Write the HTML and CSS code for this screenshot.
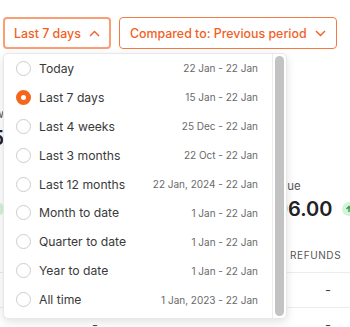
FILE: index.html
```html
<!DOCTYPE html>
<html lang="en">
<head>
  <meta charset="UTF-8">
  <meta name="viewport" content="width=device-width, initial-scale=1.0">
  <title>Overview</title>
  <link rel="stylesheet" href="styles.css">
</head>
<body>

  <div class="toolbar">
    <div class="picker">
      <button class="btn btn-open">Last 7 days
        <svg class="chev" width="11" height="7" viewBox="0 0 11 7"><path d="M1 6 L5.5 1.5 L10 6" fill="none" stroke="currentColor" stroke-width="1.4"/></svg>
      </button>

      <div class="menu">
        <ul class="options">
          <li class="option"><span class="radio"></span><span class="name">Today</span><span class="range">22 Jan - 22 Jan</span></li>
          <li class="option"><span class="radio on"></span><span class="name">Last 7 days</span><span class="range">15 Jan - 22 Jan</span></li>
          <li class="option"><span class="radio"></span><span class="name">Last 4 weeks</span><span class="range">25 Dec - 22 Jan</span></li>
          <li class="option"><span class="radio"></span><span class="name">Last 3 months</span><span class="range">22 Oct - 22 Jan</span></li>
          <li class="option"><span class="radio"></span><span class="name">Last 12 months</span><span class="range">22 Jan, 2024 - 22 Jan</span></li>
          <li class="option"><span class="radio"></span><span class="name">Month to date</span><span class="range">1 Jan - 22 Jan</span></li>
          <li class="option"><span class="radio"></span><span class="name">Quarter to date</span><span class="range">1 Jan - 22 Jan</span></li>
          <li class="option"><span class="radio"></span><span class="name">Year to date</span><span class="range">1 Jan - 22 Jan</span></li>
          <li class="option"><span class="radio"></span><span class="name">All time</span><span class="range">1 Jan, 2023 - 22 Jan</span></li>
        </ul>
        <div class="scroll"><div class="thumb"></div></div>
      </div>
    </div>

    <button class="btn">Compared to: Previous period
      <svg class="chev" width="11" height="7" viewBox="0 0 11 7"><path d="M1 1 L5.5 5.5 L10 1" fill="none" stroke="currentColor" stroke-width="1.4"/></svg>
    </button>
  </div>

  <div class="stats">
    <div class="stat stat-left">
      <div class="stat-label">New</div>
      <div class="stat-value">15</div>
    </div>
  </div>

  <div class="stats stats-second">
    <div class="stat stat-left">
      <span class="badge"></span>
    </div>
    <div class="stat stat-right">
      <div class="stat-label">Net revenue</div>
      <div class="stat-value">$1,296.00 <span class="badge">
        <svg width="8" height="8" viewBox="0 0 8 8"><path d="M4 7 V1.5 M1.5 4 L4 1.5 L6.5 4" fill="none" stroke="#2f9e44" stroke-width="1.4"/></svg>
      </span></div>
    </div>
  </div>

  <div class="table">
    <div class="row head">
      <div class="cell"></div>
      <div class="cell">Orders</div>
      <div class="cell">Refunds</div>
    </div>
    <div class="row">
      <div class="cell"></div>
      <div class="cell">-</div>
      <div class="cell dash">-</div>
    </div>
    <div class="row">
      <div class="cell"></div>
      <div class="cell">-</div>
      <div class="cell dash">-</div>
    </div>
  </div>

</body>
</html>
```

FILE: styles.css
```css
body {
  font-family: Inter, 'Liberation Sans', sans-serif;
  background-color: #fff;
  margin: 0;
  overflow: hidden;
  color: #222;
}
.toolbar {
  display: flex;
  gap: 8px;
  padding: 17px 0 0 3px;
}
.picker {
  position: relative;
}
.btn {
  display: flex;
  align-items: center;
  gap: 6px;
  height: 32px;
  padding: 0 10px;
  font-family: Inter, 'Liberation Sans', sans-serif;
  font-size: 12.4px;
  font-weight: 500;
  white-space: nowrap;
  color: #f25f24;
  background: #fff;
  border: 1px solid #f47a45;
  border-radius: 4px;
}
.btn-open {
  border: 2px solid #fa9e78;
  padding: 0 9px;
}
.chev {
  margin-left: 2px;
}
.menu {
  position: absolute;
  top: 36px;
  left: 0;
  width: 284px;
  height: 266px;
  box-sizing: border-box;
  display: flex;
  background: #fff;
  border: 1px solid #e8e8e8;
  border-radius: 5px;
  box-shadow: 0 3px 10px rgba(0,0,0,0.12);
  z-index: 5;
}
.options {
  flex: 1;
  list-style: none;
  margin: 0;
  padding: 0;
}
.option {
  display: flex;
  align-items: center;
  height: 28.9px;
  padding: 0 14px 0 12px;
}
.radio {
  width: 13px;
  height: 13px;
  border: 1px solid #cdcdcd;
  border-radius: 50%;
  margin-right: 8px;
  flex-shrink: 0;
}
.radio.on {
  box-sizing: border-box;
  width: 15px;
  height: 15px;
  border: 5px solid #f4661b;
}
.name {
  flex: 1;
  font-size: 12.2px;
  color: #3a3a3a;
}
.range {
  font-size: 10px;
  color: #6a6a6a;
}
.scroll {
  width: 14px;
  border-left: 1px solid #ececec;
  padding: 2px;
  box-sizing: border-box;
}
.thumb {
  height: 100%;
  background: #c3c3c3;
  border-radius: 5px;
}
.stats {
  display: flex;
  margin-top: 57px;
}
.stat {
  flex-shrink: 0;
}
.stat-left {
  width: 60px;
  margin-left: -56px;
  text-align: right;
}
.stat-label {
  font-size: 12px;
  color: #555;
  line-height: 16px;
}
.stat-value {
  font-size: 20px;
  font-weight: 600;
  line-height: 26px;
  margin-top: 3px;
  white-space: nowrap;
}
.stats-second {
  margin-top: 27px;
}
.stats-second .stat-label + .stat-value {
  margin-top: 2px;
}
.stats-second .stat-left {
  padding-top: 24px;
  line-height: 14px;
}
.stat-right {
  margin-left: 231px;
}
.stat-right .stat-label {
  font-size: 11.4px;
}
.badge {
  display: inline-flex;
  align-items: center;
  justify-content: center;
  width: 14px;
  height: 14px;
  border-radius: 50%;
  background: #d3f3da;
  vertical-align: 3px;
  margin-left: 4px;
}
.table {
  margin-top: 15px;
}
.row {
  display: grid;
  grid-template-columns: 92px 198px 1fr;
  height: 34px;
  align-items: center;
  border-bottom: 1px solid #ececec;
  font-size: 13px;
  color: #444;
}
.row.head {
  font-size: 10px;
  letter-spacing: 0.6px;
  text-transform: uppercase;
  color: #555;
  height: 35px;
}
.dash {
  padding-left: 35px;
}
```
